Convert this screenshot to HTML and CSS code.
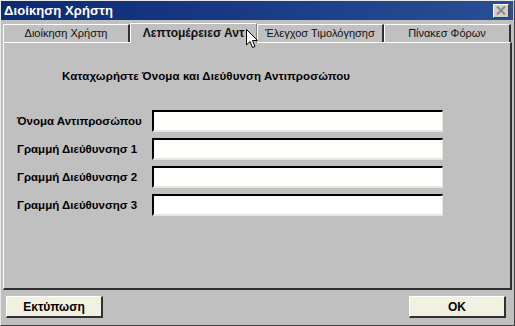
FILE: index.html
```html
<!DOCTYPE html>
<html lang="el">
<head>
<meta charset="utf-8">
<link rel="stylesheet" href="styles.css">
</head>
<body>
<div class="window">
  <div class="titlebar">
    <span class="title">Διοίκηση Χρήστη</span>
    <span class="close"><svg width="10" height="9" viewBox="0 0 10 9"><path d="M1 0.5 L9 8.5 M9 0.5 L1 8.5" stroke="#8a8a8a" stroke-width="2"/></svg></span>
  </div>
  <div class="tabs">
    <div class="tab">Διοίκηση Χρήστη</div>
    <div class="tab active">Λεπτομέρειεσ Αντ</div>
    <div class="tab">Έλεγχοσ Τιμολόγησησ</div>
    <div class="tab">Πίνακεσ Φόρων</div>
  </div>
  <div class="panel">
    <div class="heading">Καταχωρήστε Όνομα και Διεύθυνση Αντιπροσώπου</div>
    <div class="form">
      <label class="label">Όνομα Αντιπροσώπου</label><div class="input"></div>
      <label class="label">Γραμμή Διεύθυνσησ 1</label><div class="input"></div>
      <label class="label">Γραμμή Διεύθυνσησ 2</label><div class="input"></div>
      <label class="label">Γραμμή Διεύθυνσησ 3</label><div class="input"></div>
    </div>
  </div>
  <div class="footer">
    <div class="btn">Εκτύπωση</div>
    <div class="btn">OK</div>
  </div>
  <svg class="cursor" width="13" height="20" viewBox="0 0 13 20"><path d="M0.5 0.5 L0.5 16 L4 12.5 L6.5 18.5 L9 17.5 L6.5 11.5 L11.5 11.5 Z" fill="#fff" stroke="#000" stroke-width="1"/></svg>
</div>
</body>
</html>
```
FILE: styles.css
```css
* { box-sizing: border-box; }
html, body { margin: 0; padding: 0; }
body { width: 515px; height: 326px; overflow: hidden; background: #c0c0c0; }
.window {
  position: relative;
  width: 515px; height: 326px;
  background: #c0c0c0;
  border-left: 1px solid #e8e8e8;
  border-top: 1px solid #e8e8e8;
  border-right: 1px solid #404040;
  border-bottom: 1px solid #404040;
  font-family: "Liberation Sans", Arial, sans-serif;
  color: #000;
  display: flex; flex-direction: column;
}
.titlebar {
  height: 19px;
  margin: 0 1px 0 0;
  background: linear-gradient(to right, #0b2a74, #2a4e95);
  display: flex; align-items: center; justify-content: space-between;
  padding: 0 4px 0 3px;
}
.title { color: #fff; font-weight: bold; font-size: 13px; letter-spacing: 0.1px; }
.close {
  width: 16px; height: 14px;
  background: #d4d0c8;
  border-top: 1px solid #fff; border-left: 1px solid #fff;
  border-right: 1px solid #404040; border-bottom: 1px solid #404040;
  display: flex; align-items: center; justify-content: center;
}
.tabs {
  display: flex;
  margin: 3px 2px 0 2px;
  height: 19px;
  align-items: flex-end;
}
.tab {
  width: 127px; height: 18px;
  border-top: 1px solid #fff; border-left: 1px solid #fff;
  border-right: 2px solid #303030;
  font-size: 11px;
  text-align: center;
  line-height: 16px;
  color: #111;
}
.tab.active { height: 20px; font-weight: bold; font-size: 12px; margin-bottom: -1px; position: relative; background: #c0c0c0; border-right: 1px solid #808080; line-height: 18px; }
.panel {
  margin: 0 2px;
  height: 248px;
  border-top: 1px solid #fff; border-left: 1px solid #fff;
  border-right: 2px solid #303030; border-bottom: 2px solid #303030;
  padding: 27px 0 0 0;
}
.heading { font-weight: bold; font-size: 11.5px; margin-left: 58px; letter-spacing: 0.1px; }
.form {
  margin-top: 28px;
  display: grid;
  grid-template-columns: 135px 291px;
  row-gap: 6px;
  align-items: center;
  padding-left: 13px;
}
.label { font-weight: bold; font-size: 11.5px; white-space: nowrap; }
.input {
  height: 22px;
  background: #fffffd;
  border-top: 2px solid #000; border-left: 2px solid #000;
  border-right: 1px solid #e6e6e0; border-bottom: 2px solid #e6e6e0;
}
.footer {
  display: flex; justify-content: space-between;
  padding: 6px 8px 0 5px;
}
.btn {
  width: 97px; height: 22px;
  background: #f2f0e0;
  border-top: 1px solid #fff; border-left: 1px solid #fff;
  border-right: 2px solid #303030; border-bottom: 2px solid #303030;
  font-weight: bold; font-size: 12px;
  display: flex; align-items: center; justify-content: center;
}
.cursor { position: absolute; left: 245px; top: 28px; }
```
